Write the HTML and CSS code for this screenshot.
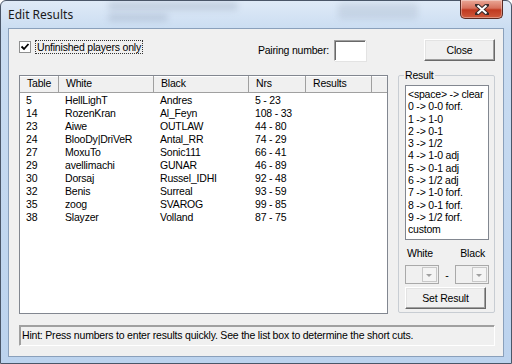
FILE: index.html
```html
<!DOCTYPE html>
<html lang="en">
  <head>
    <meta charset="UTF-8" />
    <title>Edit Results</title>
    <link rel="stylesheet" href="styles.css">
  </head>
  <body>
    <div class="window">
      <div class="titlebar">
        <span class="title">Edit Results</span>
        <span class="smudge s1"></span>
        <span class="smudge s2"></span>
        <span class="smudge s3"></span>
        <button class="close-x">
          <svg width="14" height="11" viewBox="0 0 14 11">
            <path d="M2 1 L12 10 M12 1 L2 10" stroke="#3a2a2a" stroke-width="4" stroke-linecap="square" />
            <path d="M2.5 1.5 L11.5 9.5 M11.5 1.5 L2.5 9.5" stroke="#fff" stroke-width="2" />
          </svg>
        </button>
      </div>
      <div class="client">
        <div class="toprow">
          <label class="check">
            <span class="box">
              <svg width="10" height="10" viewBox="0 0 10 10">
                <path d="M1.5 4.5 L4 7 L8.5 2" stroke="#000" stroke-width="1.8" fill="none" />
              </svg>
            </span>
            <span class="check-label">Unfinished players only</span>
          </label>
          <span class="pair-label">Pairing number:</span>
          <span class="edit"></span>
          <button class="btn close-btn">Close</button>
        </div>

        <div class="mainrow">
          <div class="listview">
            <div class="lv-head">
              <span>Table</span>
              <span>White</span>
              <span>Black</span>
              <span>Nrs</span>
              <span>Results</span>
              <span></span>
            </div>
            <div class="lv-body">
              <div class="lv-row"><span>5</span><span>HellLighT</span><span>Andres</span><span>5 - 23</span><span></span></div>
              <div class="lv-row"><span>14</span><span>RozenKran</span><span>Al_Feyn</span><span>108 - 33</span><span></span></div>
              <div class="lv-row"><span>23</span><span>Aiwe</span><span>OUTLAW</span><span>44 - 80</span><span></span></div>
              <div class="lv-row"><span>24</span><span>BlooDy|DriVeR</span><span>Antal_RR</span><span>74 - 29</span><span></span></div>
              <div class="lv-row"><span>27</span><span>MoxuTo</span><span>Sonic111</span><span>66 - 41</span><span></span></div>
              <div class="lv-row"><span>29</span><span>avellimachi</span><span>GUNAR</span><span>46 - 89</span><span></span></div>
              <div class="lv-row"><span>30</span><span>Dorsaj</span><span>Russel_IDHI</span><span>92 - 48</span><span></span></div>
              <div class="lv-row"><span>32</span><span>Benis</span><span>Surreal</span><span>93 - 59</span><span></span></div>
              <div class="lv-row"><span>35</span><span>zoog</span><span>SVAROG</span><span>99 - 85</span><span></span></div>
              <div class="lv-row"><span>38</span><span>Slayzer</span><span>Volland</span><span>87 - 75</span><span></span></div>
            </div>
          </div>

          <div class="group">
            <span class="legend">Result</span>
            <div class="listbox">
              <div>&lt;space&gt; -&gt; clear</div>
              <div>0 -&gt; 0-0 forf.</div>
              <div>1 -&gt; 1-0</div>
              <div>2 -&gt; 0-1</div>
              <div>3 -&gt; 1/2</div>
              <div>4 -&gt; 1-0 adj</div>
              <div>5 -&gt; 0-1 adj</div>
              <div>6 -&gt; 1/2 adj</div>
              <div>7 -&gt; 1-0 forf.</div>
              <div>8 -&gt; 0-1 forf.</div>
              <div>9 -&gt; 1/2 forf.</div>
              <div>custom</div>
            </div>
            <div class="colors">
              <span>White</span>
              <span>Black</span>
            </div>
            <div class="combos">
              <span class="combo"><span class="arrow"></span></span>
              <span class="dash">-</span>
              <span class="combo"><span class="arrow"></span></span>
            </div>
            <button class="btn set-btn">Set Result</button>
          </div>
        </div>

        <div class="hint">Hint: Press numbers to enter results quickly. See the list box to determine the short cuts.</div>
      </div>
    </div>
  </body>
</html>
```

FILE: styles.css
```css
body {
  margin: 0;
  width: 512px;
  height: 364px;
  overflow: hidden;
  background: #fff;
}
.window {
  box-sizing: border-box;
  width: 512px;
  height: 364px;
  border: 1px solid #4a5668;
  border-radius: 6px 6px 0 0;
  background: linear-gradient(#dfeaf7, #c9dcf1 30px, #bcd3ee);
  display: flex;
  flex-direction: column;
  padding: 0 7px 6px 7px;
  font-family: "Liberation Sans", Arial, sans-serif;
  font-size: 10.5px;
  letter-spacing: -0.2px;
  color: #000;
}
.titlebar {
  position: relative;
  height: 27px;
  display: flex;
  align-items: center;
}
.title {
  font-family: "Noto Sans", "Open Sans", sans-serif;
  font-size: 12px;
  letter-spacing: 0;
  color: #1a1a1a;
  margin-top: -1px;
  position: relative;
  z-index: 1;
}
.smudge {
  position: absolute;
  background: rgba(80, 95, 120, 0.18);
  filter: blur(3px);
  border-radius: 4px;
}
.s1 { left: 100px; top: 1px; width: 130px; height: 8px; }
.s2 { left: 100px; top: 13px; width: 60px; height: 7px; }
.s3 { left: 330px; top: 2px; width: 80px; height: 16px; background: rgba(80, 95, 120, 0.12); }
.close-x {
  position: absolute;
  right: 1px;
  top: -1px;
  width: 43px;
  height: 19px;
  border: 1px solid #5a2a22;
  border-top: none;
  border-radius: 0 0 5px 5px;
  background: linear-gradient(#eaa897, #d7715c 45%, #c0391f 55%, #cf5a3c);
  box-shadow: inset 0 0 0 1px rgba(255, 255, 255, 0.35);
  display: flex;
  align-items: center;
  justify-content: center;
  padding: 0;
}
.client {
  flex: 1;
  background: #f0f0f0;
  border: 1px solid #8aa0bb;
  display: flex;
  flex-direction: column;
  padding: 10px 8px 0 10px;
}
.toprow {
  display: flex;
  align-items: center;
  height: 22px;
}
.check {
  display: flex;
  align-items: center;
  margin-top: -7px;
}
.box {
  box-sizing: border-box;
  width: 12px;
  height: 12px;
  border: 1px solid #8e8f8f;
  background: #fff;
  display: flex;
  align-items: center;
  justify-content: center;
}
.check-label {
  margin-left: 4px;
  padding: 0 1px;
  border: 1px dotted #333;
}
.pair-label {
  margin-left: auto;
  margin-right: 5px;
}
.edit {
  box-sizing: border-box;
  width: 32px;
  height: 21px;
  background: #fff;
  border: 1px solid #a0a0a0;
  border-right-color: #fff;
  border-bottom-color: #fff;
  box-shadow: inset 1px 1px 0 #696969, 1px 1px 0 #e3e3e3;
  margin-right: 58px;
}
.btn {
  box-sizing: border-box;
  font-family: inherit;
  font-size: 10.5px;
  letter-spacing: -0.2px;
  color: #000;
  background: #f0f0f0;
  border: 1px solid;
  border-color: #fff #696969 #696969 #fff;
  box-shadow: inset -1px -1px 0 #a0a0a0, inset 1px 1px 0 #e3e3e3;
  padding: 0;
}
.close-btn {
  width: 71px;
  height: 22px;
}
.mainrow {
  display: flex;
  margin-top: 14px;
  height: 239px;
}
.listview {
  box-sizing: border-box;
  width: 369px;
  height: 239px;
  background: #fff;
  border: 1px solid #828790;
}
.lv-head,
.lv-row {
  display: grid;
  grid-template-columns: 39px 95px 95px 57px 66px 1fr;
}
.lv-head {
  height: 16px;
  background: #f0f0f0;
  border-bottom: 1px solid #a0a0a0;
  box-shadow: inset 0 1px 0 #fff;
}
.lv-head span {
  padding-left: 7px;
  line-height: 15px;
  border-right: 1px solid #a0a0a0;
}
.lv-head span:last-child {
  border-right: none;
}
.lv-body {
  padding-top: 1px;
}
.lv-row {
  height: 13px;
  line-height: 13px;
}
.lv-row span {
  padding-left: 6px;
  white-space: nowrap;
}
.group {
  position: relative;
  box-sizing: border-box;
  width: 97px;
  height: 238px;
  margin-left: 10px;
  border: 1px solid #c8cdd3;
  border-radius: 2px;
  padding: 9px 5px 0 6px;
  display: flex;
  flex-direction: column;
}
.legend {
  position: absolute;
  top: -7px;
  left: 5px;
  padding: 0 1px;
  background: #f0f0f0;
}
.listbox {
  box-sizing: border-box;
  height: 155px;
  background: #fff;
  border: 1px solid #828790;
  padding: 2px 0 0 2px;
  line-height: 12.3px;
  white-space: nowrap;
  overflow: hidden;
}
.colors {
  display: flex;
  justify-content: space-between;
  margin-top: 7px;
  padding: 0 4px 0 2px;
}
.combos {
  display: flex;
  align-items: center;
  margin-top: 6px;
}
.combo {
  box-sizing: border-box;
  width: 34px;
  height: 19px;
  border: 1px solid #a9a9a9;
  background: #f0f0f0;
  display: flex;
  justify-content: flex-end;
}
.arrow {
  box-sizing: border-box;
  width: 15px;
  margin: 1px;
  border: 1px solid #c8c8c8;
  background: #f4f4f4;
  position: relative;
}
.arrow::after {
  content: "";
  position: absolute;
  left: 3px;
  top: 6px;
  border-left: 3px solid transparent;
  border-right: 3px solid transparent;
  border-top: 3px solid #a0a0a0;
}
.dash {
  flex: 1;
  text-align: center;
}
.set-btn {
  width: 81px;
  height: 22px;
  margin-top: 3px;
}
.hint {
  box-sizing: border-box;
  height: 21px;
  margin-top: 11px;
  border: 1px solid #a0a0a0;
  border-right-color: #fff;
  border-bottom-color: #fff;
  box-shadow: 1px 1px 0 #a0a0a0 inset;
  padding: 3px 0 0 2px;
  white-space: nowrap;
}
```
